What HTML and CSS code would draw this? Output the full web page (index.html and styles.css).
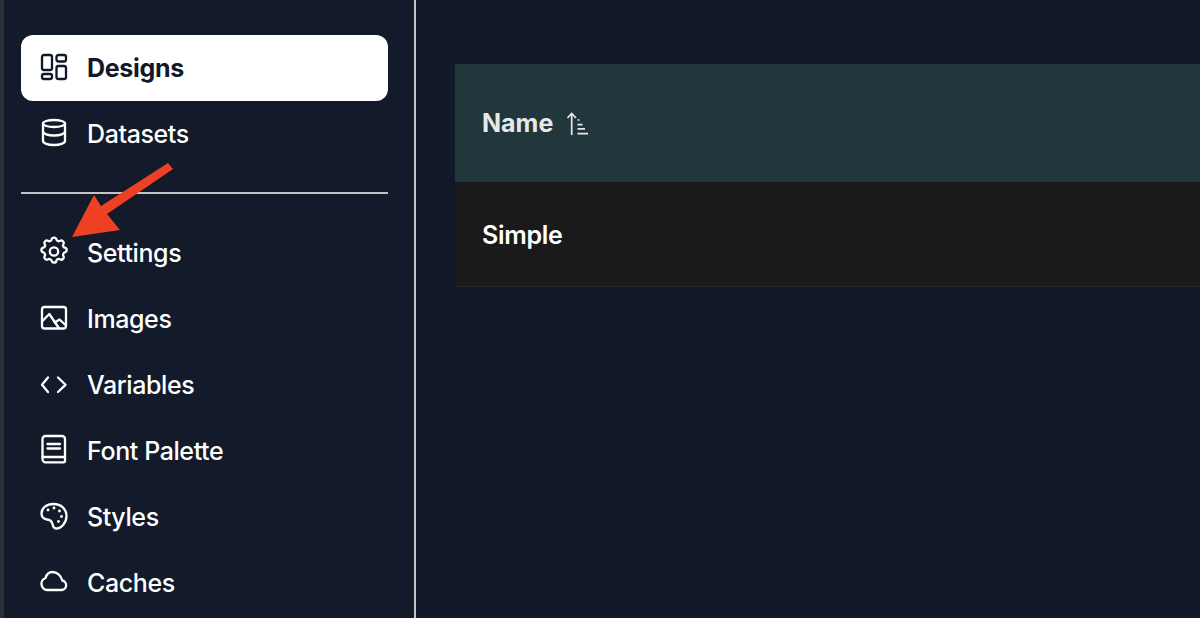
FILE: index.html
```html
<!DOCTYPE html>
<html lang="en">
<head>
  <meta charset="UTF-8" />
  <title>Designs</title>
  <link rel="stylesheet" href="styles.css">
</head>
<body>
  <div class="strip"></div>

  <aside class="sidebar">
    <nav class="nav-group">
      <a class="nav-item active">
        <svg class="icon" viewBox="0 0 28 28"><rect x="2" y="1" width="10" height="15" rx="2"/><rect x="2" y="20" width="10" height="5" rx="2"/><rect x="16.500" y="1" width="9.500" height="6.500" rx="2"/><rect x="16.500" y="12" width="9.500" height="13" rx="2"/></svg>
        <span>Designs</span>
      </a>
      <a class="nav-item">
        <svg class="icon" viewBox="0 0 28 28"><ellipse cx="14" cy="3.500" rx="11" ry="3.500"/><path d="M3 3.500v17.500c0 2.200 4.900 4 11 4s11-1.800 11-4V3.500"/><path d="M3 11.500c0 2.200 4.900 4 11 4s11-1.800 11-4"/></svg>
        <span>Datasets</span>
      </a>
    </nav>

    <hr class="divider">

    <nav class="nav-group">
      <a class="nav-item">
        <svg class="icon" viewBox="2 3.070 20 20"><path d="M10.300 3.300c.4-1.700 3-1.700 3.400 0a1.700 1.700 0 0 0 2.600 1.100c1.500-.9 3.300.8 2.400 2.300a1.700 1.700 0 0 0 1.100 2.600c1.700.4 1.700 2.900 0 3.400a1.700 1.700 0 0 0-1.100 2.500c.9 1.500-.8 3.300-2.400 2.400a1.700 1.700 0 0 0-2.600 1.100c-.4 1.700-2.900 1.700-3.400 0a1.700 1.700 0 0 0-2.500-1.100c-1.500.9-3.300-.8-2.400-2.400a1.700 1.700 0 0 0-1.100-2.500c-1.700-.4-1.700-3 0-3.400a1.700 1.700 0 0 0 1.100-2.600c-.9-1.500.8-3.200 2.400-2.300 1 .6 2.300.1 2.500-1.100z"/><circle cx="12" cy="12" r="3"/></svg>
        <span>Settings</span>
      </a>
      <a class="nav-item">
        <svg class="icon" viewBox="0 0 28 28"><rect x="2" y="2" width="24" height="21.500" rx="2.500"/><path d="M2 16.500l7.300-7.500 9.500 14"/><path d="M14.800 17.500l4.700-3 6.500 6"/></svg>
        <span>Images</span>
      </a>
      <a class="nav-item">
        <svg class="icon" viewBox="0 0 28 28"><path d="M8 6.500L2 13.800 8 21"/><path d="M18 6.500l7.500 7.300L18 21"/></svg>
        <span>Variables</span>
      </a>
      <a class="nav-item">
        <svg class="icon" viewBox="0 0 28 28"><path d="M5.500-1H22a3 3 0 0 1 3 3v22.300a1 1 0 0 1-1 1H5.500a3 3 0 0 1-3-3V2a3 3 0 0 1 3-3z"/><path d="M2.500 20H25"/><path d="M7.500 7h12.500M7.500 11.500h12.500"/></svg>
        <span>Font Palette</span>
      </a>
      <a class="nav-item">
        <svg class="icon" viewBox="0 0 28 28"><path d="M13.500 1C6.500 1 1.500 5 1.500 10.500c0 3.500 2.500 5.500 5.500 6 3.500.3 4.800 1.800 5.500 4.500.6 3 1.500 4.500 3.500 4.500 5.500 0 10.500-6 10.500-12.500C26.500 6 21 1 13.500 1z"/><circle class="dot" cx="8" cy="7" r="1.400"/><circle class="dot" cx="14" cy="5" r="1.400"/><circle class="dot" cx="19.500" cy="8" r="1.400"/><circle class="dot" cx="21.500" cy="13.500" r="1.400"/><circle class="dot" cx="18.500" cy="18.500" r="1.400"/></svg>
        <span>Styles</span>
      </a>
      <a class="nav-item">
        <svg class="icon" viewBox="0 0 28 28"><path d="M8 21h13.500a4.800 4.800 0 0 0 .8-9.500C21 6.500 17 3 12.500 3 9 3 6.500 5.500 5.500 9A6.200 6.200 0 0 0 8 21z"/></svg>
        <span>Caches</span>
      </a>
    </nav>
  </aside>

  <main class="content">
    <div class="table">
      <div class="table-head">
        <span>Name</span>
        <svg class="sort-icon" viewBox="0 0 24 24"><path d="M6.700 23V1.500"/><path d="M2.500 6l4.200-4.500L11 6"/><path d="M12.500 8h2M12.500 12.700h5M12.500 16.900h7.500M12.500 21.700h10.500"/></svg>
      </div>
      <div class="table-row">Simple</div>
    </div>
  </main>

  <!-- red annotation arrow -->
  <svg class="arrow" viewBox="0 0 1200 618"><path d="M168 163L173 169L107 214L120 230L72 237L94 195L101 206Z"/></svg>
</body>
</html>
```

FILE: styles.css
```css
html, body {
  margin: 0;
  padding: 0;
  height: 100%;
  overflow: hidden;
}

body {
  display: flex;
  font-family: "Inter", "Liberation Sans", sans-serif;
  background-color: #111827;
  color: #fff;
}

.strip {
  width: 4px;
  background-color: #263238;
}

.sidebar {
  width: 412px;
  flex: none;
  box-sizing: border-box;
  padding: 35px 26px 0 17px;
  background-color: #131a2a;
  border-right: 2px solid #c4c4c4;
}

.nav-item {
  display: flex;
  align-items: center;
  gap: 19px;
  height: 66px;
  padding-left: 19px;
  box-sizing: border-box;
  font-size: 25px;
  font-weight: 500;
  letter-spacing: -0.4px;
}

.nav-item.active {
  background-color: #fff;
  color: #111827;
  font-weight: 700;
  letter-spacing: -0.3px;
  border-radius: 12px;
}

.icon {
  width: 28px;
  height: 28px;
  flex: none;
  overflow: visible;
  fill: none;
  stroke: currentColor;
  stroke-width: 2.3;
  stroke-linecap: round;
  stroke-linejoin: round;
}

.icon * {
  vector-effect: non-scaling-stroke;
}

.icon .dot {
  fill: currentColor;
  stroke: none;
}

.divider {
  height: 2px;
  margin: 25px 0 26px;
  border: 0;
  background-color: #c4c4c4;
}

.content {
  flex: 1;
  padding: 64px 0 0 39px;
  min-width: 0;
}

.table-head {
  display: flex;
  align-items: center;
  gap: 12px;
  height: 118px;
  padding-left: 27px;
  background-color: #22373c;
  color: #e8e8e8;
  font-size: 25px;
  font-weight: 700;
}

.sort-icon {
  width: 24px;
  height: 24px;
  margin-top: 1px;
  fill: none;
  stroke: currentColor;
  stroke-width: 1.7;
}

.table-row {
  display: flex;
  align-items: center;
  box-sizing: border-box;
  height: 105px;
  padding: 2px 0 0 27px;
  background-color: #1a1a1a;
  border-bottom: 1px solid #2a2a2e;
  font-size: 25px;
  font-weight: 600;
  letter-spacing: -0.3px;
}

.arrow {
  position: absolute;
  top: 0;
  left: 0;
  width: 1200px;
  height: 618px;
  fill: #ee4023;
}
```
